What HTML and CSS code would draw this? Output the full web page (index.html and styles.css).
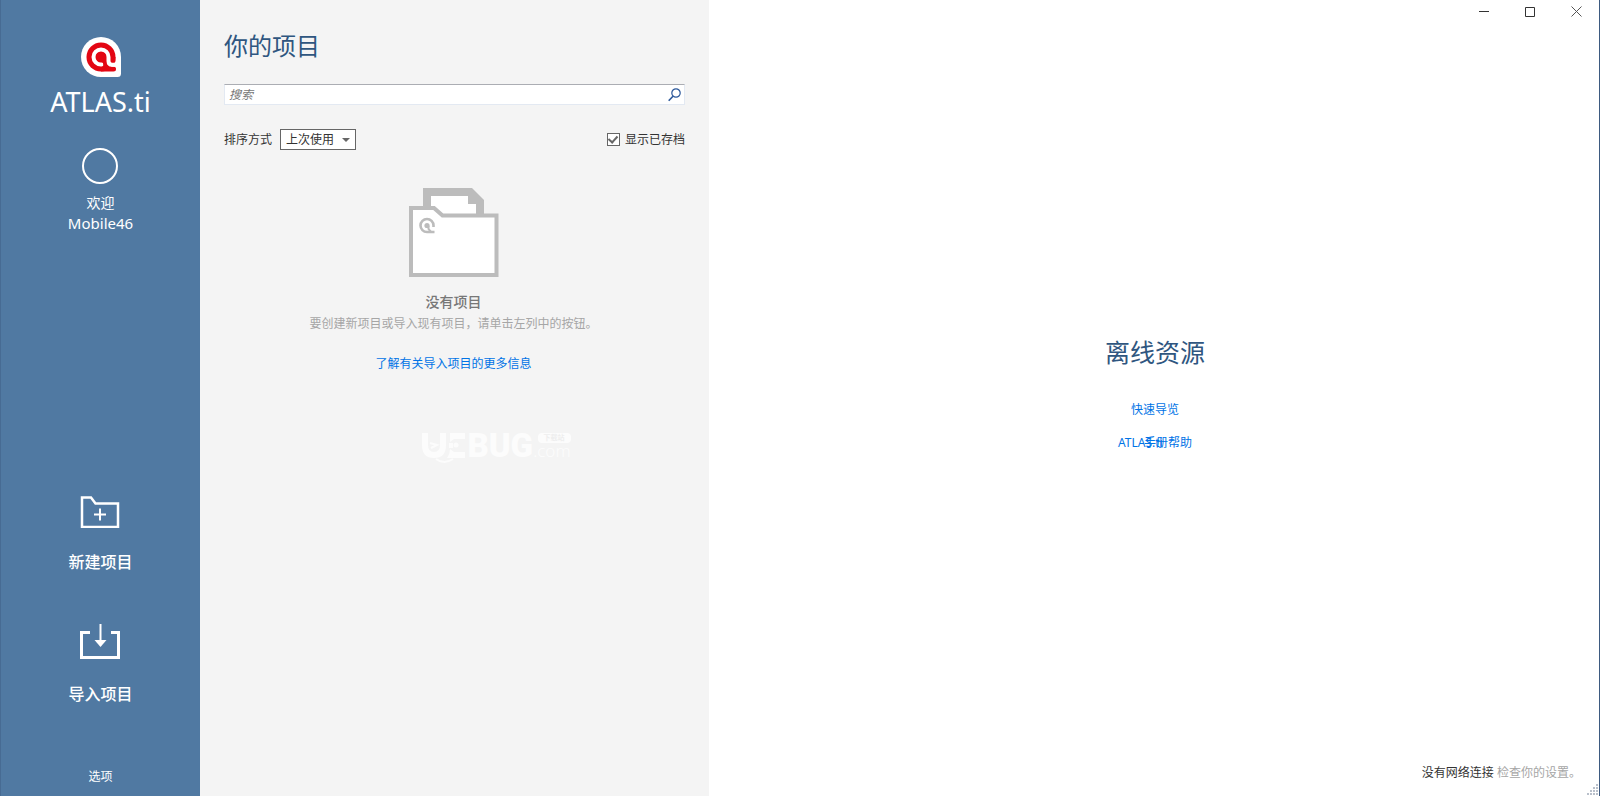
FILE: index.html
```html
<!DOCTYPE html>
<html lang="zh-CN">
<head>
<meta charset="utf-8">
<meta name="viewport" content="width=device-width, initial-scale=1">
<title>ATLAS.ti</title>
<link rel="stylesheet" href="styles.css">
</head>
<body>
<div class="window">
  <nav class="sidebar">
    <div class="brand">
      <svg class="brand-mark" viewBox="0 0 40 40" aria-hidden="true">
        <path d="M20 0A20 20 0 0 0 20 40H36.500Q40 40 40 36.500V20A20 20 0 0 0 20 0Z" fill="#fff"/>
        <circle cx="20" cy="20" r="14.500" fill="#e30613"/>
        <path d="M20 29.500H32.500A2.500 2.500 0 0 1 32.500 34.500H20Z" fill="#e30613"/>
        <path d="M32 20H34.500V23.500A2.500 2.500 0 0 1 29.500 23.500V20Z" fill="#e30613"/>
        <path d="M34 26.200L34 29.500H30L29 25Q30 26.500 34 26.200Z" fill="#fff"/>
        <path d="M20.500 27.500H20A7.500 7.500 0 1 1 27.500 20V24Q27.500 27.800 31 27.800H36" fill="none" stroke="#fff" stroke-width="4" stroke-linecap="round"/>
        <circle cx="20" cy="20" r="5" fill="#e30613"/>
        <path d="M23.500 20V25.500Q24 30.500 29 32" fill="none" stroke="#e30613" stroke-width="3"/>
      </svg>
      <span class="brand-name">ATLAS.ti</span>
    </div>
    <div class="user">
      <span class="avatar"></span>
      <span class="welcome">欢迎</span>
      <span class="user-name">Mobile46</span>
    </div>
    <div class="actions">
      <button class="action" type="button">
        <svg width="40" height="36" viewBox="0 0 40 36" fill="none" stroke="#fff" aria-hidden="true">
          <path d="M2 5.500H11L15.500 11.500H38V35H2Z" stroke-width="2.500"/>
          <path d="M20 16.500V28.500M14 22.500H26" stroke-width="2"/>
        </svg>
        <span>新建项目</span>
      </button>
      <button class="action" type="button">
        <svg width="40" height="36" viewBox="0 0 40 36" fill="none" stroke="#fff" aria-hidden="true">
          <path d="M10 8.500H1.500V33.500H38.500V8.500H31" stroke-width="3"/>
          <path d="M20.500 0V18" stroke-width="2"/>
          <path d="M14.500 16H26.500L20.500 23Z" fill="#fff" stroke="none"/>
        </svg>
        <span>导入项目</span>
      </button>
    </div>
    <button class="options" type="button">选项</button>
  </nav>

  <section class="projects">
    <h1 class="heading">你的项目</h1>
    <div class="search">
      <input class="search-input" type="search" placeholder="搜索" aria-label="搜索">
      <button class="search-button" type="button" aria-label="搜索">
        <svg width="13" height="14" viewBox="0 0 13 14" fill="none" stroke="#2b579a" aria-hidden="true">
          <circle cx="8" cy="5" r="4.200" stroke-width="1.200"/>
          <path d="M5 8.200L.7 12.800" stroke-width="1.600"/>
        </svg>
      </button>
    </div>
    <div class="filters">
      <label class="filter-label" for="sort">排序方式</label>
      <span class="select-box">
        <select class="select" id="sort"><option>上次使用</option></select>
        <svg class="select-arrow" width="8" height="4" viewBox="0 0 8 4" aria-hidden="true"><path d="M0 0H8L4 4Z" fill="#666"/></svg>
      </span>
      <label class="archive"><input class="check" type="checkbox" checked>显示已存档</label>
    </div>
    <div class="empty">
      <svg class="folder" width="90" height="90" viewBox="0 0 90 90" aria-hidden="true">
        <path d="M14 0H63L75 12V30H14Z" fill="#bcbcbc"/>
        <path d="M22 8H59V16H67V30H22Z" fill="#fff"/>
        <path d="M2 20H25L33.500 27.500H87.500V87H2Z" fill="#fff" stroke="#bcbcbc" stroke-width="4"/>
        <path d="M24.500 39V37.500A6.500 6.500 0 1 0 18 44H25.500" fill="none" stroke="#bcbcbc" stroke-width="2.600"/>
        <circle cx="18" cy="37.500" r="2.600" fill="#bcbcbc"/>
        <path d="M19.500 38V41L22 44" fill="none" stroke="#bcbcbc" stroke-width="2"/>
      </svg>
      <h2 class="empty-title">没有项目</h2>
      <p class="empty-text">要创建新项目或导入现有项目，请单击左列中的按钮。</p>
      <a class="link" href="#import">了解有关导入项目的更多信息</a>
    </div>
    <div class="watermark">
      <svg class="watermark-initials" width="44" height="32" viewBox="0 0 44 32" fill="#fcfcfc" aria-hidden="true">
        <path d="M0 0H6V12Q6 19 12 19Q18 19 18 12V0H24V12Q24 25 12 25Q0 25 0 12Z"/>
        <path d="M28 0H43V6H32L28 9ZM27 10H31V15H27ZM28 16L32 19H43V25H25Q28 21 28 16Z"/>
        <circle cx="34" cy="12" r="2.500"/>
        <path d="M8 10L15 12L9 15M14 26Q22 32 31 26" fill="none" stroke="#fcfcfc" stroke-width="2"/>
      </svg>
      <span class="watermark-name">BUG</span>
      <span class="watermark-side"><span class="watermark-tag">下载站</span><span class="watermark-domain">.com</span></span>
    </div>
  </section>

  <main class="resources">
    <div class="window-controls">
      <button class="control" type="button" aria-label="最小化"><svg width="11" height="11" viewBox="0 0 11 11"><path d="M0 5.500H10" stroke="#333"/></svg></button>
      <button class="control" type="button" aria-label="最大化"><svg width="11" height="11" viewBox="0 0 11 11"><path d="M.5 1.500H9.500V10.500H.5Z" fill="none" stroke="#333"/></svg></button>
      <button class="control" type="button" aria-label="关闭"><svg width="11" height="11" viewBox="0 0 11 11"><path d="M.5 .5L10.500 10.500M10.500 .5L.5 10.500" stroke="#555"/></svg></button>
    </div>
    <div class="offline">
      <h2 class="heading offline-title">离线资源</h2>
      <a class="link" href="#tour">快速导览</a>
      <a class="link manual" href="#manual"><span>ATLAS.ti</span><span class="manual-text">手册帮助</span></a>
    </div>
    <footer class="status">没有网络连接 <span class="status-hint">检查你的设置。</span></footer>
    <svg class="grip" width="12" height="12" viewBox="0 0 12 12" fill="#b9c0cb" aria-hidden="true">
      <path d="M9 0h2v2H9zM6 3h2v2H6zM9 3h2v2H9zM3 6h2v2H3zM6 6h2v2H6zM9 6h2v2H9zM0 9h2v2H0zM3 9h2v2H3zM6 9h2v2H6zM9 9h2v2H9z"/>
    </svg>
  </main>
</div>
</body>
</html>
```

FILE: styles.css
```css
* {
  box-sizing: border-box;
}

body {
  margin: 0;
  background: #fff;
  color: #333;
  font: 12px/20px "Noto Sans", "Noto Sans CJK SC", sans-serif;
}

button,
input,
select {
  margin: 0;
  padding: 0;
  border: 0;
  border-radius: 0;
  background: none;
  color: inherit;
  font: inherit;
}

svg {
  display: block;
}

h1,
h2,
p {
  margin: 0;
}

.window {
  display: grid;
  grid-template-columns: 200px minmax(0, 509px) minmax(0, 1fr);
  min-height: 100vh;
  border-right: 1px solid #3d5a80;
}

.sidebar {
  display: flex;
  flex-direction: column;
  align-items: center;
  padding: 37px 0 9px;
  border-left: 1px solid #476b93;
  background: #5079a2;
  color: #fff;
}

.brand,
.user,
.actions {
  display: flex;
  flex-direction: column;
  align-items: center;
}

.brand-mark {
  width: 40px;
  height: 40px;
}

.brand-name {
  margin-top: 9px;
  font-size: 27px;
  line-height: 32px;
}

.user {
  margin-top: 30px;
  font-size: 14px;
}

.avatar {
  width: 36px;
  height: 36px;
  margin-bottom: 9px;
  border: 2px solid #fff;
  border-radius: 50%;
}

.user-name {
  font-size: 15px;
}

.actions {
  gap: 48px;
  margin-top: auto;
}

.action {
  display: flex;
  flex-direction: column;
  align-items: center;
  gap: 20px;
  font-size: 16px;
  font-weight: 500;
  line-height: 28px;
}

.options {
  margin-top: 59px;
}

.projects {
  padding: 28px 24px 24px;
  background: #f4f4f4;
}

.heading {
  color: #2f5680;
  font-size: 24px;
  font-weight: 400;
  line-height: 36px;
}

.search {
  display: flex;
  align-items: center;
  height: 21px;
  margin-top: 20px;
  padding: 0 3px 0 4px;
  border: 1px solid #e3e9f2;
  border-top-color: #abadb3;
  background: #fff;
}

.search-input {
  flex: 1;
  min-width: 0;
  height: 18px;
  line-height: 18px;
}

.search-input::placeholder {
  color: #777;
  font-style: italic;
  opacity: 1;
}

.filters {
  display: flex;
  align-items: center;
  margin-top: 24px;
}

.select-box {
  display: flex;
  position: relative;
  margin-left: 8px;
}

.select {
  width: 76px;
  height: 21px;
  padding-left: 5px;
  appearance: none;
  border: 1px solid #666;
  background: #fff;
}

.select-arrow {
  position: absolute;
  top: 9px;
  right: 6px;
}

.archive {
  display: flex;
  align-items: center;
  gap: 5px;
  margin-left: auto;
}

.check {
  display: grid;
  place-items: center;
  width: 13px;
  height: 13px;
  appearance: none;
  border: 1px solid #666;
  background: #fff;
}

.check:checked::before {
  content: "";
  width: 4px;
  height: 7px;
  margin-bottom: 2px;
  border: solid #666;
  border-width: 0 2px 2px 0;
  transform: rotate(42deg);
}

.empty {
  display: flex;
  flex-direction: column;
  align-items: center;
  margin: 38px 2px 0 0;
}

.empty-title {
  margin: 14px 0 2px;
  color: #777;
  font-size: 14px;
  font-weight: 500;
  line-height: 20px;
}

.empty-text {
  margin-bottom: 20px;
  color: #a6a6a6;
}

.link {
  color: #0073e6;
  text-decoration: none;
}

.watermark {
  display: flex;
  justify-content: center;
  height: 32px;
  margin: 59px 0 0 84px;
  color: #fcfcfc;
}

.watermark-name {
  margin-left: 1px;
  font: 900 33px/26px Roboto, sans-serif;
}

.watermark-side {
  display: flex;
  flex-direction: column;
}

.watermark-tag {
  align-self: flex-end;
  padding: 0 6px;
  border-radius: 4px;
  background: #fcfcfc;
  color: #eee;
  font-size: 7px;
  font-weight: 700;
  line-height: 10px;
}

.watermark-domain {
  font-size: 17px;
  font-weight: 300;
  line-height: 16px;
}

.resources {
  display: flex;
  position: relative;
  flex-direction: column;
}

.window-controls {
  display: flex;
  justify-content: flex-end;
  height: 24px;
}

.control {
  display: grid;
  place-items: center;
  width: 46px;
  height: 23px;
}

.offline {
  display: flex;
  flex: 1;
  flex-direction: column;
  align-items: center;
  justify-content: center;
  gap: 13px;
  padding-left: 2px;
}

.offline-title {
  margin-bottom: 17px;
  font-size: 25px;
}

.manual {
  display: grid;
  grid-template-columns: 26px 48px;
  white-space: nowrap;
}

.status {
  padding: 0 18px 13px;
  text-align: right;
}

.status-hint {
  color: #a6a6a6;
}

.grip {
  position: absolute;
  right: 0;
  bottom: 0;
}
```
